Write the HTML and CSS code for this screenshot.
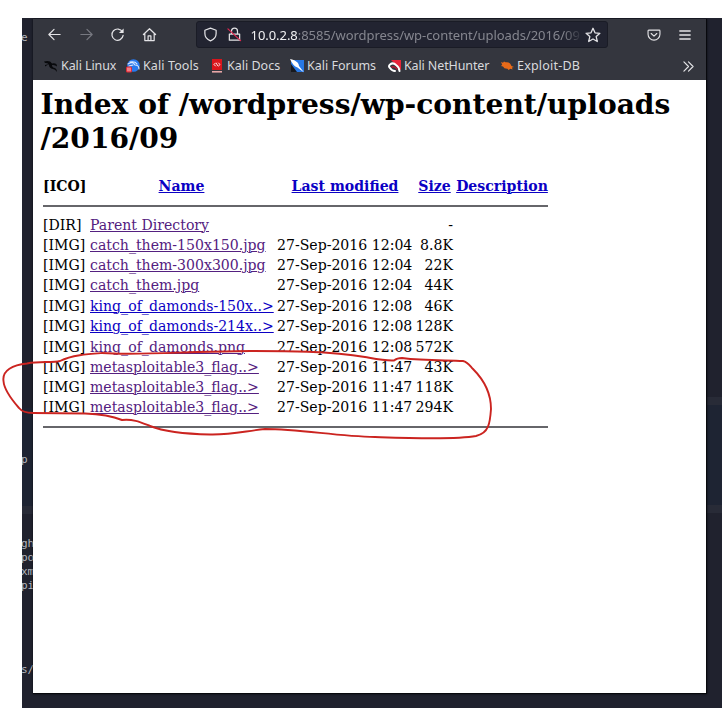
FILE: index.html
```html
<!DOCTYPE html>
<html lang="en">
<head>
<meta charset="utf-8">
<title>Index of /wordpress/wp-content/uploads/2016/09</title>
<link rel="stylesheet" href="styles.css">
</head>
<body>
<div class="desktop">
  <div class="glow glow-left"></div>
  <div class="glow glow-right"></div>
  <span class="term t1">e</span>
  <span class="term t2">p</span>
  <span class="term t3">gh<br>po<br>xm<br>pi</span>
  <span class="term t4">s/</span>
  <main class="window">
    <header class="chrome">
      <div class="toolbar">
        <svg class="nav" viewBox="0 0 16 16"><path d="M14 8H2M7.5 2.5 2 8l5.500 5.500"/></svg>
        <svg class="nav dim" viewBox="0 0 16 16"><path d="M2 8h12M8.500 2.500 14 8l-5.500 5.500"/></svg>
        <svg class="nav" viewBox="0 0 16 16"><path d="M13.300 5.200A6 6 0 1 0 14 9"/><path d="M14.500 1.500v5h-5z" fill="#e6e6e8" stroke="none"/></svg>
        <svg class="nav" viewBox="0 0 16 16"><path d="M1.500 8 8 1.800 14.500 8M3 7v7.500h10V7M6.500 14v-4.500h3V14"/></svg>
        <div class="urlbar">
          <svg class="shield" viewBox="0 0 16 16"><path d="M8 1.200 14 3.500V7c0 4-2.500 6.500-6 7.800C4.500 13.500 2 11 2 7V3.500z"/></svg>
          <svg class="lock" viewBox="0 0 16 16"><path d="M4.800 7V4.500a3.200 3.200 0 0 1 6.400 0V7M2.500 7.500h11v6.500h-11z"/><path class="slash" d="M1 2l13.500 12.500"/></svg>
          <div class="url"><b>10.0.2.8</b>:8585/wordpress/wp-content/uploads/2016/09</div>
          <svg class="star" viewBox="0 0 16 16"><path d="M8 1.300l2 4.500 4.900.5-3.700 3.300 1.100 4.900L8 12l-4.300 2.500 1.100-4.900L1.100 6.300 6 5.800z"/></svg>
        </div>
        <svg class="pocket" viewBox="0 0 16 16"><path d="M2 2.500h12q.8 0 .8.800V7a6.800 6.800 0 0 1-13.600 0V3.300q0-.8.800-.8zM4.800 6.300 8 9.300l3.200-3"/></svg>
        <svg class="menu" viewBox="0 0 12 12"><path d="M.8 2h10.400M.8 6h10.400M.8 10h10.400"/></svg>
      </div>
      <nav class="bookmarks">
        <div class="bm b1"><svg viewBox="0 0 14 14"><path d="M0 2.500Q6 1 8 4.500q5-1 5 3-2-2-5-1.500 0 2.500 3 3 2 1 2 4-2-3-4-3-4-1-4-4Q4 3.500 1 4zM1 6l4-1-4 2.500" fill="#08090c"/></svg>Kali Linux</div>
        <div class="bm b2"><svg viewBox="0 0 14 14"><circle cx="7.500" cy="6.500" r="6.300" fill="#2879ee"/><path d="M2 5q5-3 7 1 4 0 4 4M4 3q5-1 7 2M3 7l4-1" fill="none" stroke="#dceaff" stroke-width="1.100"/><rect y="7.500" width="6" height="6" rx="1.500" fill="#e32b36"/><path d="M2 9v3M4 9v3" stroke="#fff" stroke-width=".8"/></svg>Kali Tools</div>
        <div class="bm b3"><svg viewBox="0 0 14 14"><path d="M2 0h10v11H2z" fill="#d9151c"/><path d="M2 12h10v1.600H2z" fill="#e8a7a7"/><path d="M5.500 4 4 5.500 5.500 7M8.500 4 10 5.500 8.500 7M6.500 4.500l1 2" fill="none" stroke="#fff" stroke-width=".9"/></svg>Kali Docs</div>
        <div class="bm b4"><svg viewBox="0 0 14 14"><path d="M1 1h13v12H1z" fill="#2978e4"/><path d="M1 5 7 13H1z" fill="#17191e"/><path d="M0 0l2 .5Q7 2 8.500 5l.5 2 5 6.500-6.500-5Q3 7 0 0z" fill="#fff"/></svg>Kali Forums</div>
        <div class="bm b5"><svg viewBox="0 0 14 14"><path d="M4 1h10v10z" fill="#e6243a"/><path d="M3 9Q1 7 3 5.500 6 3 9 6q3 2 3.500 6M3 9q2 3 5 3" fill="none" stroke="#fff" stroke-width="2"/><path d="M5 8q3-1 5 2" fill="none" stroke="#b71930" stroke-width="1.500"/></svg>Kali NetHunter</div>
        <div class="bm b6"><svg viewBox="0 0 14 14"><path d="M1 3l2 .8L4 2.500l1.500.8Q10 2.500 11.500 7L14 8l-2 .6.500 2-2-.8-2 1.200-1-1.200Q4 10 3 7.500L1 7l1.200-1.200z" fill="#e76a19"/></svg>Exploit-DB</div>
        <svg class="more" viewBox="0 0 12 12"><path d="M1 1l5 5-5 5M6 1l5 5-5 5"/></svg>
      </nav>
    </header>
    <section class="page">
      <h1>Index of /wordpress/wp-content/uploads<br>/2016/09</h1>
      <table>
        <colgroup><col class="c-icon"><col class="c-name"><col class="c-date"><col class="c-size"><col class="c-desc"></colgroup>
        <thead><tr><th>[ICO]</th><th><a href="#">Name</a></th><th><a href="#">Last modified</a></th><th><a href="#">Size</a></th><th><a href="#">Description</a></th></tr></thead>
        <tbody>
        <tr><td>[DIR]</td><td><a class="seen" href="#">Parent Directory</a></td><td></td><td>-</td><td></td></tr>
        <tr><td>[IMG]</td><td><a class="seen" href="#">catch_them-150x150.jpg</a></td><td>27-Sep-2016 12:04</td><td>8.8K</td><td></td></tr>
        <tr><td>[IMG]</td><td><a class="seen" href="#">catch_them-300x300.jpg</a></td><td>27-Sep-2016 12:04</td><td>22K</td><td></td></tr>
        <tr><td>[IMG]</td><td><a class="seen" href="#">catch_them.jpg</a></td><td>27-Sep-2016 12:04</td><td>44K</td><td></td></tr>
        <tr><td>[IMG]</td><td><a href="#">king_of_damonds-150x..&gt;</a></td><td>27-Sep-2016 12:08</td><td>46K</td><td></td></tr>
        <tr><td>[IMG]</td><td><a href="#">king_of_damonds-214x..&gt;</a></td><td>27-Sep-2016 12:08</td><td>128K</td><td></td></tr>
        <tr><td>[IMG]</td><td><a class="seen" href="#">king_of_damonds.png</a></td><td>27-Sep-2016 12:08</td><td>572K</td><td></td></tr>
        <tr><td>[IMG]</td><td><a class="seen" href="#">metasploitable3_flag..&gt;</a></td><td>27-Sep-2016 11:47</td><td>43K</td><td></td></tr>
        <tr><td>[IMG]</td><td><a class="seen" href="#">metasploitable3_flag..&gt;</a></td><td>27-Sep-2016 11:47</td><td>118K</td><td></td></tr>
        <tr><td>[IMG]</td><td><a class="seen" href="#">metasploitable3_flag..&gt;</a></td><td>27-Sep-2016 11:47</td><td>294K</td><td></td></tr>
        </tbody>
      </table>
    </section>
  </main>
</div>
<svg class="annotation" viewBox="0 0 722 708"><path d="M122 420C112 416 98 414 85 413.500L33 413Q23 413 19 408C12 400 4 389 3.500 381C2 370 13 365 27 363.500C40 361 52 363 60 361C72 355 88 354 102 353C130 355 165 353 198 352L250 351C285 351 330 351 365 357C376 359 385 361 394 360.500Q397 358 402 358C425 361 448 360 463 361C468 362 470 366 473 369C484 380 491 393 491 409C490 423 489 433 476 436C455 440 405 438 375 437C335 436 300 429 265 429C245 431 232 435 210 434.500C184 434 165 432 150 426C140 422 134 419 122 420"/></svg>
</body>
</html>
```
FILE: styles.css
```css
* { box-sizing: border-box; }
body { margin: 0; width: 722px; height: 708px; overflow: hidden; position: relative; background: #fff; }
.desktop { position: relative; margin: 18px 0 0 22px; width: 700px; height: 690px; padding: 1px 0 0 11px; background: #20222e; overflow: hidden; }
.glow { position: absolute; background: #1e2433; border-style: solid; border-color: #282b37; border-width: 8px 0; }
.glow-left { left: 0; top: 390px; width: 11px; height: 106px; border-top: 0; }
.glow-right { left: 685px; top: 379px; width: 15px; height: 116px; }
.term { position: absolute; left: -1px; width: 12px; overflow: hidden; white-space: nowrap; color: #b5b7bd; font: 11px/14px "DejaVu Sans Mono", monospace; }
.t1 { top: 13px; }
.t2 { top: 435px; }
.t3 { top: 519px; }
.t4 { top: 645px; }
.window { position: relative; width: 674px; height: 675px; background: #fff; border-right: 1px solid #08090d; border-bottom: 1px solid #08090d; box-shadow: 0 0 2px #08090d; }
.chrome { height: 61px; background: #34363e; color: #d9dadd; font: 13px/18px "Noto Sans", sans-serif; }
svg { flex: none; fill: none; stroke: #e3e3e6; stroke-width: 1.3; stroke-linecap: round; stroke-linejoin: round; }
.toolbar { height: 31px; display: flex; align-items: center; padding: 0 15px 0 14px; }
.nav { width: 15px; height: 15px; margin-right: 16.500px; }
.dim { stroke: #777981; }
.urlbar { margin-left: 22.500px; width: 412px; height: 27px; padding: 0 6px; display: flex; align-items: center; border: 1px solid #1a1c26; border-radius: 3px; background: #222431; }
.shield, .lock { width: 15px; height: 15px; }
.lock { margin-left: 9px; }
.lock .slash { stroke: #e22850; }
.url { flex: 1; margin-left: 9px; overflow: hidden; white-space: nowrap; font-size: 13px; letter-spacing: -.05px; color: #85868f; -webkit-mask-image: linear-gradient(90deg, #000 94%, transparent); mask-image: linear-gradient(90deg, #000 94%, transparent); }
.url b { font-weight: 400; color: #f0f0f2; }
.star { width: 16px; height: 16px; margin-left: 2px; }
.pocket { width: 14px; height: 14px; margin-left: 39px; }
.menu { width: 12px; height: 12px; margin-left: auto; }
.bookmarks { height: 30px; display: flex; align-items: center; position: relative; padding: 2px 12px 0 11px; font-size: 12.500px; }
.bm { display: flex; align-items: center; gap: 3px; white-space: nowrap; }
.bm svg { width: 14px; height: 14px; stroke-width: 1; }
.bm svg path:not([stroke]), .bm svg rect, .bm svg circle { stroke: none; }
.b1 { width: 82px; letter-spacing: -.1px; }
.b2 { width: 84px; letter-spacing: .1px; }
.b3 { width: 80px; }
.b4 { width: 97px; }
.b5 { width: 113px; letter-spacing: -.12px; }
.b6 { letter-spacing: .2px; }
.more { width: 11px; height: 11px; margin-left: auto; }
.page { padding: 8px 7.500px 0; color: #000; font: 14.080px/16px "DejaVu Serif", serif; }
h1 { margin: 0 0 19px; font-size: 28.120px; line-height: 34px; white-space: nowrap; }
table { margin-left: 2.500px; width: 505px; table-layout: fixed; border-collapse: collapse; white-space: nowrap; }
.c-icon { width: 47px; }
.c-name { width: 187px; }
.c-date { width: 136px; }
.c-size { width: 43px; }
.c-desc { width: 92px; }
th, td { padding: 0; text-align: left; }
th { height: 31px; padding-bottom: 9px; text-align: center; }
th:first-child { text-align: left; }
th:nth-child(2) { padding-right: 4px; }
td { height: 20px; }
td:nth-child(4) { text-align: right; padding-right: 3px; }
thead { border-bottom: 2px solid #66666a; }
tbody { border-bottom: 2px solid #66666a; }
tbody tr:first-child td { height: 29px; padding-top: 8px; }
tbody tr:nth-child(5) td { height: 21px; }
tbody tr:nth-child(7) td { height: 21px; }
tbody tr:last-child td { height: 30px; padding-bottom: 9px; }
a { color: #0b00c4; text-decoration: underline; text-decoration-thickness: 1px; }
.seen { color: #542080; }
.annotation { position: absolute; left: 0; top: 0; width: 722px; height: 708px; stroke: #cb2420; stroke-width: 1.900; pointer-events: none; }
```
